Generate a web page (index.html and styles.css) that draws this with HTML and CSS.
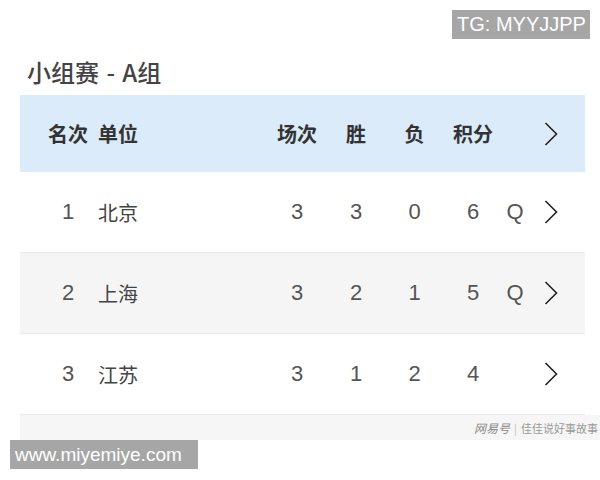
FILE: index.html
```html
<!DOCTYPE html>
<html lang="zh-CN">
<head>
<meta charset="utf-8">
<title>小组赛 - A组</title>
<link rel="stylesheet" href="styles.css">
</head>
<body>
<div class="page">
  <h1 class="title">小组赛 - A组</h1>
  <div class="table">
    <div class="row head">
      <span class="rank">名次</span>
      <span class="name">单位</span>
      <span class="c">场次</span>
      <span class="c">胜</span>
      <span class="c">负</span>
      <span class="c">积分</span>
      <span class="c"></span>
      <span class="c arrow"><svg width="14" height="24" viewBox="0 0 14 24"><path d="M1.5 1 L12.5 12 L1.5 23" fill="none" stroke="#222" stroke-width="1.6"/></svg></span>
    </div>
    <div class="row">
      <span class="rank">1</span>
      <span class="name">北京</span>
      <span class="c">3</span>
      <span class="c">3</span>
      <span class="c">0</span>
      <span class="c">6</span>
      <span class="c">Q</span>
      <span class="c arrow"><svg width="14" height="24" viewBox="0 0 14 24"><path d="M1.5 1 L12.5 12 L1.5 23" fill="none" stroke="#222" stroke-width="1.6"/></svg></span>
    </div>
    <div class="row alt">
      <span class="rank">2</span>
      <span class="name">上海</span>
      <span class="c">3</span>
      <span class="c">2</span>
      <span class="c">1</span>
      <span class="c">5</span>
      <span class="c">Q</span>
      <span class="c arrow"><svg width="14" height="24" viewBox="0 0 14 24"><path d="M1.5 1 L12.5 12 L1.5 23" fill="none" stroke="#222" stroke-width="1.6"/></svg></span>
    </div>
    <div class="row">
      <span class="rank">3</span>
      <span class="name">江苏</span>
      <span class="c">3</span>
      <span class="c">1</span>
      <span class="c">2</span>
      <span class="c">4</span>
      <span class="c"></span>
      <span class="c arrow"><svg width="14" height="24" viewBox="0 0 14 24"><path d="M1.5 1 L12.5 12 L1.5 23" fill="none" stroke="#222" stroke-width="1.6"/></svg></span>
    </div>
    <div class="footer"><span class="brand">网易号</span><span class="sep">|</span><span>佳佳说好事故事</span></div>
  </div>
  <div class="wm wm-tg">TG: MYYJJPP</div>
  <div class="wm wm-site">www.miyemiye.com</div>
</div>
</body>
</html>
```
FILE: styles.css
```css
html, body {
  margin: 0;
  padding: 0;
  background: #fff;
}
.page {
  position: relative;
  width: 600px;
  height: 480px;
  overflow: hidden;
  padding-top: 56px;
  box-sizing: border-box;
  font-family: "Liberation Sans", "Noto Sans CJK SC", sans-serif;
}
.title {
  margin: 0 0 7px 0;
  padding-left: 27px;
  height: 32px;
  line-height: 32px;
  font-family: "Noto Sans CJK SC", sans-serif;
  font-size: 24px;
  font-weight: 500;
  word-spacing: 2px;
  color: #444;
}
.table {
  margin: 0 15px 0 20px;
}
.row {
  display: grid;
  grid-template-columns: 40px 180px 58px 60px 57px 60px 24px 47px;
  align-items: center;
  padding-left: 28px;
  height: 81px;
  box-sizing: border-box;
  border-bottom: 1px solid #ebebeb;
  font-size: 22px;
  color: #555;
}
.row.head {
  height: 77px;
  background: #dcebf9;
  border-bottom: none;
  font-family: "Noto Sans CJK SC", sans-serif;
  font-size: 20px;
  font-weight: 700;
  color: #333;
}
.row.alt {
  background: #f5f5f5;
}
.rank {
  text-align: center;
}
.name {
  padding-left: 10px;
  font-family: "Noto Sans CJK SC", sans-serif;
  font-size: 20px;
  color: #444;
}
.head .name {
  color: #333;
}
.c {
  text-align: center;
}
.arrow {
  display: flex;
  justify-content: center;
  align-items: center;
}
.arrow svg {
  display: block;
}
.footer {
  margin-right: -15px;
  height: 25px;
  background: #f6f6f6;
  display: flex;
  justify-content: flex-end;
  align-items: center;
  gap: 4px;
  padding-right: 2px;
  font-family: "Noto Sans CJK SC", sans-serif;
  font-size: 11px;
  color: #9a9a9a;
}
.brand {
  font-size: 12px;
  font-style: italic;
  color: #8a8a8a;
}
.sep {
  color: #bbb;
}
.wm {
  position: absolute;
  background: #a6a6a6;
  color: #fff;
  font-family: "Liberation Sans", sans-serif;
  height: 29px;
  line-height: 29px;
  box-sizing: border-box;
  padding-left: 5px;
  white-space: nowrap;
}
.wm-tg {
  left: 452px;
  top: 10px;
  width: 138px;
  font-size: 20px;
}
.wm-site {
  left: 10px;
  top: 440px;
  width: 188px;
  font-size: 19px;
}
```
